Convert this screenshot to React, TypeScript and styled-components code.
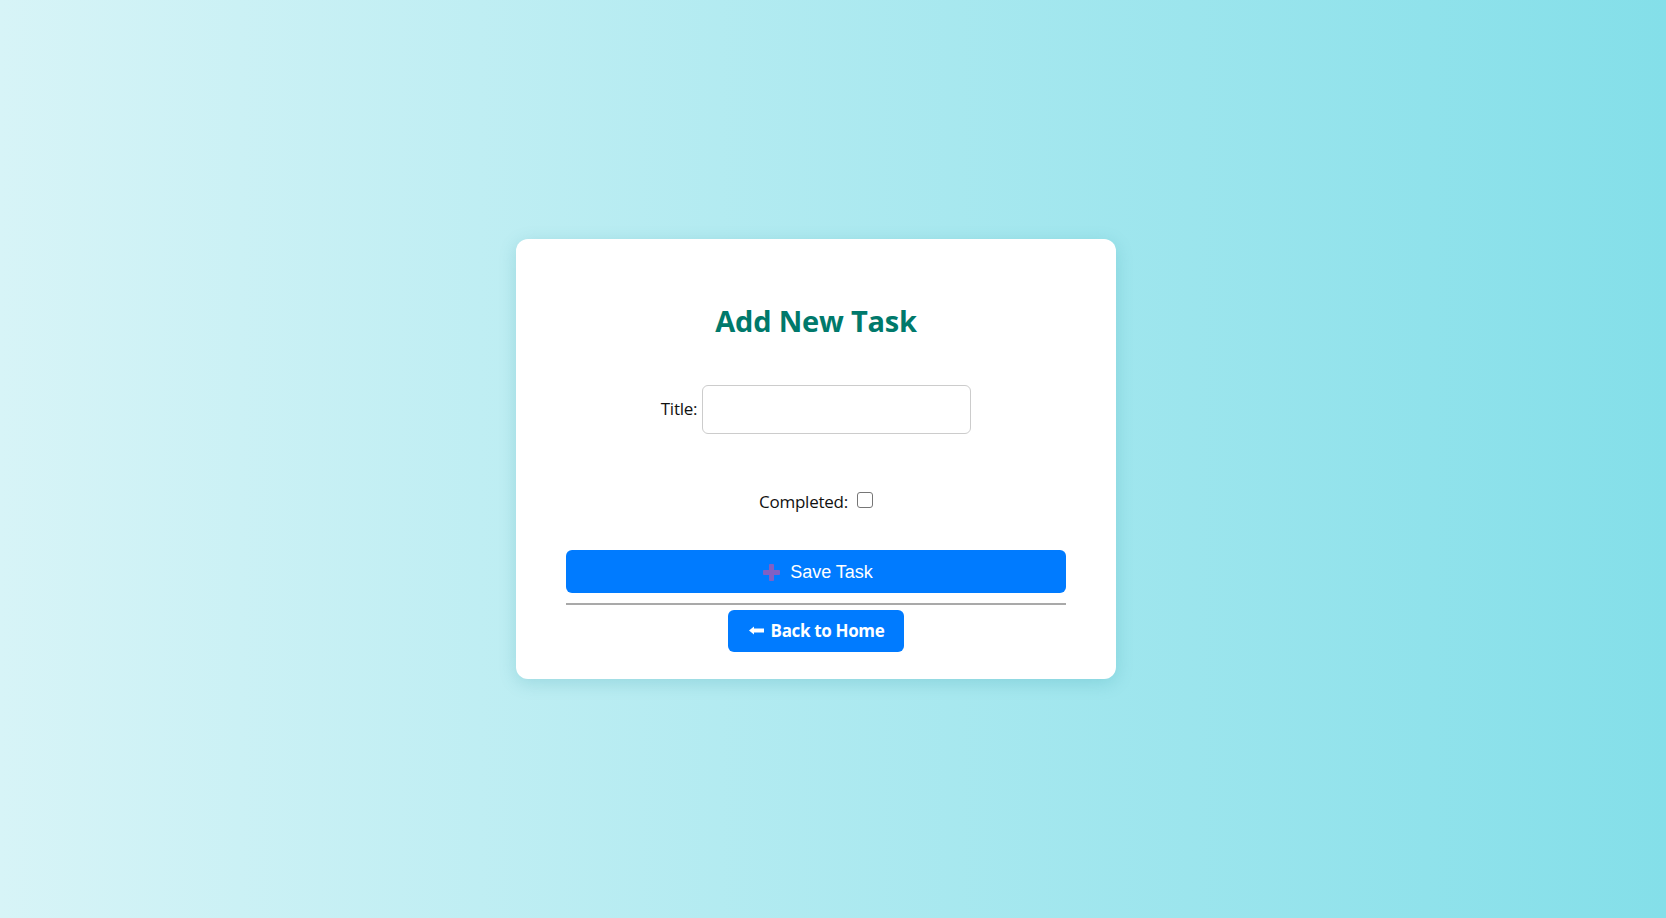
import React from "react";
import styled, { createGlobalStyle } from "styled-components";

const Global = createGlobalStyle`
  html, body { margin: 0; padding: 0; }
  body {
    font-family: "Open Sans", "Noto Sans", sans-serif;
    background: linear-gradient(to right, #d7f4f7, #84dfe9);
    min-height: 918px;
  }
  * { box-sizing: border-box; }
`;

const Page = styled.div`
  min-height: 918px;
  display: flex;
  align-items: center;
  justify-content: center;
  padding-right: 34px;
  padding-bottom: 1px;
`;

const Card = styled.div`
  width: 600px;
  background: #ffffff;
  border-radius: 12px;
  box-shadow: 0 4px 18px rgba(0, 120, 140, 0.18);
  padding: 65px 50px 27px;
  display: flex;
  flex-direction: column;
  align-items: center;
`;

const Title = styled.h2`
  margin: 0;
  font-family: "Open Sans", sans-serif;
  font-weight: 700;
  font-size: 29px;
  line-height: 34px;
  color: #00796b;
  letter-spacing: -0.2px;
`;

const Form = styled.form`
  width: 100%;
  display: flex;
  flex-direction: column;
  align-items: center;
  margin-top: 47px;
`;

const Row = styled.div<{ $mt?: number }>`
  display: flex;
  align-items: center;
  justify-content: center;
  margin-top: ${(p) => p.$mt ?? 0}px;
`;

const Label = styled.label<{ $gap: number }>`
  font-family: "Open Sans", sans-serif;
  font-size: 17px;
  line-height: 24px;
  color: #111;
  margin-right: ${(p) => p.$gap}px;
  letter-spacing: -0.25px;
`;

const TextInput = styled.input`
  width: 269px;
  height: 49px;
  border: 1px solid #cccccc;
  border-radius: 6px;
  padding: 8px 10px;
  font-size: 16px;
  outline: none;
  background: #fff;
`;

const Check = styled.input`
  appearance: none;
  width: 16px;
  height: 16px;
  margin: 0;
  border: 1px solid #767676;
  border-radius: 3px;
  background: #fff;
  position: relative;
  top: -2px;
`;

const SaveButton = styled.button`
  width: 100%;
  height: 43px;
  margin-top: 36px;
  border: none;
  border-radius: 6px;
  background: #007bff;
  color: #fff;
  font-family: "Liberation Sans", Arial, sans-serif;
  font-size: 18px;
  display: flex;
  align-items: center;
  justify-content: center;
  gap: 10px;
  cursor: pointer;
  padding: 2px 0 0 4px;
`;

const Divider = styled.hr`
  width: 100%;
  margin: 10px 0 5px;
  border: none;
  border-top: 2px solid #a9a9a9;
  height: 0;
`;

const BackButton = styled.a`
  height: 42px;
  padding: 0 20px 0 21px;
  border-radius: 6px;
  background: #007bff;
  color: #fff;
  font-family: "Open Sans", sans-serif;
  font-weight: 700;
  font-size: 17px;
  letter-spacing: -0.35px;
  display: inline-flex;
  align-items: center;
  gap: 7px;
  text-decoration: none;
`;

const PlusIcon = () => (
  <svg width="17" height="17" viewBox="0 0 17 17">
    <rect x="6" y="0" width="5" height="17" rx="1" fill="#8060c4" />
    <rect x="0" y="6" width="17" height="5" rx="1" fill="#8060c4" />
  </svg>
);

const ArrowIcon = () => (
  <svg width="15" height="9" viewBox="0 0 15 9">
    <path d="M0 4.5 L5 0.5 L5 2.5 L15 2.5 L15 6.5 L5 6.5 L5 8.5 Z" fill="#fff" />
  </svg>
);

export default function App() {
  return (
    <>
      <Global />
      <Page>
        <Card>
          <Title>Add New Task</Title>
          <Form onSubmit={(e) => e.preventDefault()}>
            <Row>
              <Label $gap={5}>Title:</Label>
              <TextInput type="text" />
            </Row>
            <Row $mt={56}>
              <Label $gap={9}>Completed:</Label>
              <Check type="checkbox" />
            </Row>
            <SaveButton type="submit">
              <PlusIcon />
              <span>Save Task</span>
            </SaveButton>
          </Form>
          <Divider />
          <BackButton href="#">
            <ArrowIcon />
            <span>Back to Home</span>
          </BackButton>
        </Card>
      </Page>
    </>
  );
}
